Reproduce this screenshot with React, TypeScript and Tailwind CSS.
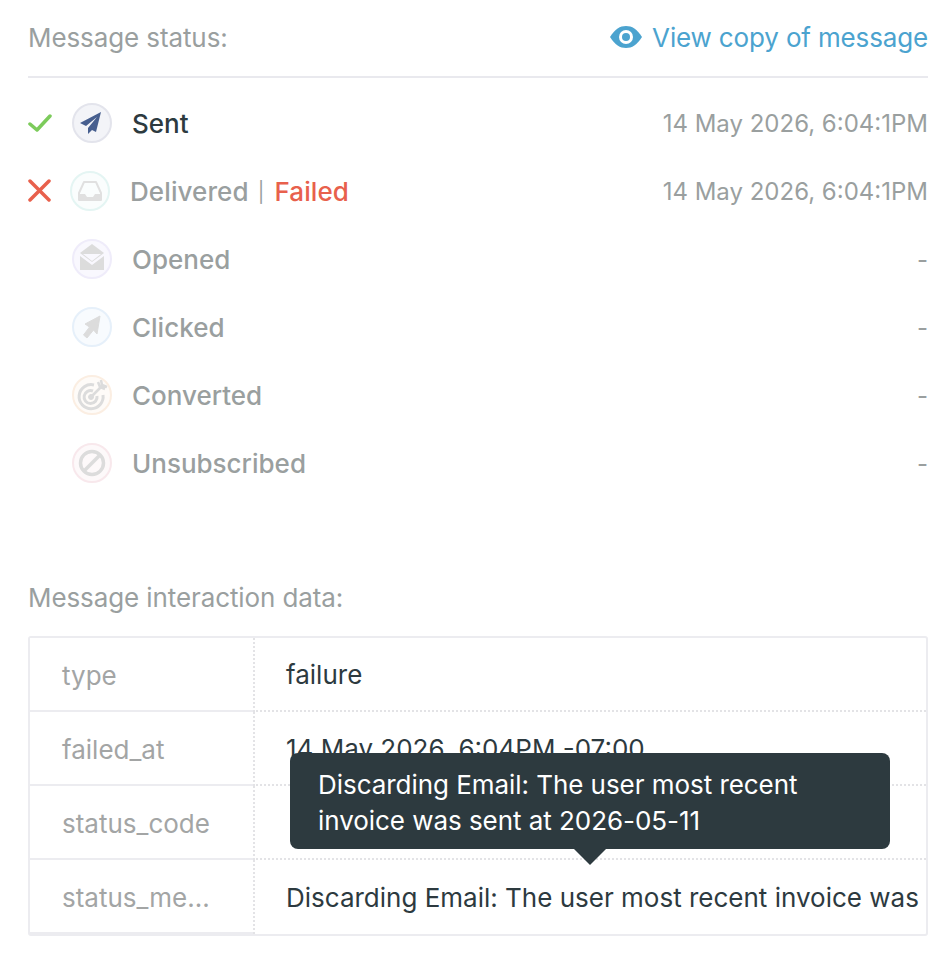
import React from 'react';

const font = "font-['Inter','Noto_Sans',sans-serif]";

function Plane() {
    return (
        <svg viewBox="0 0 40 40" className="w-[40px] h-[40px]">
            <path d="M29 9 L8 20 L14 23 L25 14 L16 25 L16 31 L20 27 L24 29 Z" fill="#475f8f" />
        </svg>
    );
}

function Inbox() {
    return (
        <svg viewBox="0 0 40 40" className="w-[40px] h-[40px]">
            <path d="M14 11 H26 L31 22 V29 H9 V22 Z" fill="none" stroke="#e0e0e0" strokeWidth="2" strokeLinejoin="round" />
            <path d="M9 23 H15 L17 26 H23 L25 23 H31 V30 H9 Z" fill="#e0e0e0" />
        </svg>
    );
}

function Envelope() {
    return (
        <svg viewBox="0 0 40 40" className="w-[40px] h-[40px]">
            <path d="M20 5 L32 14 L20 23 L8 14 Z" fill="#dcdcdc" />
            <path d="M8 17 L20 26 L32 17 V31 H8 Z" fill="#dcdcdc" />
            <path d="M11 15 H29 L20 22 Z" fill="#f9f8fe" />
        </svg>
    );
}

function Cursor() {
    return (
        <svg viewBox="0 0 40 40" className="w-[40px] h-[40px]">
            <path d="M28 9 L25 27 L21.5 23 L15 31 L11.5 28 L17.5 20 L13 17 Z" fill="#dcdcdc" stroke="#dcdcdc" strokeLinejoin="round" />
        </svg>
    );
}

function Target() {
    return (
        <svg viewBox="0 0 40 40" className="w-[40px] h-[40px]" fill="none" stroke="#dcdcdc">
            <path d="M22 10 A 12 12 0 1 0 31 20" strokeWidth="3" />
            <path d="M21 16 A 6.5 6.5 0 1 0 25 21" strokeWidth="3" />
            <circle cx="19" cy="22" r="2.5" fill="#dcdcdc" />
            <path d="M19 22 L29 12" strokeWidth="2.5" />
            <path d="M26 7 L28 12 L33 14 M29 5 L30 10 L35 12" strokeWidth="2.5" />
        </svg>
    );
}

function Ban() {
    return (
        <svg viewBox="0 0 40 40" className="w-[40px] h-[40px]" fill="none" stroke="#dcdcdc" strokeWidth="3.5">
            <circle cx="20" cy="20" r="11.5" />
            <path d="M12 28 L28 12" />
        </svg>
    );
}

function StatusRow({ mark, icon, circle, label, time, shift }: { mark?: React.ReactNode; icon: React.ReactNode; circle: string; label: React.ReactNode; time: string; shift?: boolean }) {
    return (
        <div className="flex items-center h-[68px]">
            <div className={shift ? 'w-[42px] shrink-0' : 'w-[44px] shrink-0'}>{mark}</div>
            <div className={`w-[40px] h-[40px] rounded-full border-2 box-border flex items-center justify-center overflow-hidden shrink-0 ${circle}`}>
                <div className="shrink-0">{icon}</div>
            </div>
            <div className="ml-[20px] flex-1">{label}</div>
            <div className="text-[24px] pt-[2px] text-[#9a9f9f]">{time}</div>
        </div>
    );
}

function TableRow({ name, value, last }: { name: string; value?: string; last?: boolean }) {
    return (
        <div className="flex h-[74px]">
            <div className="w-[223px] shrink-0 pl-[32px] pt-[2px] flex items-center text-[26px] text-[#a3a5a5] bg-white border-b-2 border-[#ececf0]">
                {name}
            </div>
            <div className={`flex-1 min-w-0 pl-[31px] pt-[2px] flex items-center border-l-2 border-dotted border-[#e3e3e6] text-[26px] text-[#2d3a3f] ${last ? '' : 'border-b-2 border-b-[#e3e3e6]'}`}>
                <div className="leading-[36px] whitespace-nowrap">{value}</div>
            </div>
        </div>
    );
}

export default function App() {
    return (
        <div className={`relative w-[944px] h-[964px] bg-white overflow-hidden pl-[28px] pr-[16px] ${font}`}>
            <div className="flex items-center justify-between h-[78px] border-b-2 border-[#e9e9ee] pb-[2px]">
                <span className="text-[26px] text-[#9a9f9f] tracking-[-0.1px]">Message status:</span>
                <a className="flex items-center text-[26px] text-[#4ba3cf] tracking-[-0.15px]">
                    <svg viewBox="0 0 32 22" className="w-[32px] h-[22px] mr-[10px]">
                        <path d="M0 11 C5 3 10 0 16 0 C22 0 27 3 32 11 C27 19 22 22 16 22 C10 22 5 19 0 11 Z" fill="#4ba3cf" />
                        <circle cx="16" cy="11" r="7" fill="#fff" />
                        <circle cx="16" cy="11" r="4" fill="#4ba3cf" />
                    </svg>
                    View copy of message
                </a>
            </div>
            <div className="pt-[11px]">
                <StatusRow
                    mark={
                        <svg viewBox="0 0 24 20" className="w-[24px] h-[20px]">
                            <path d="M2 11 L9 17 L22 3" fill="none" stroke="#7ccb5b" strokeWidth="3.5" strokeLinecap="round" strokeLinejoin="round" />
                        </svg>
                    }
                    icon={<Plane />}
                    circle="border-[#e3e4ec] bg-[#f3f4f8]"
                    label={<span className="text-[26px] font-medium text-[#2d3a3f]">Sent</span>}
                    time="14 May 2026, 6:04:1PM"
                />
                <StatusRow
                    shift
                    mark={
                        <svg viewBox="0 0 24 24" className="w-[24px] h-[24px]">
                            <path d="M2 2 L21 21 M21 2 L2 21" fill="none" stroke="#e8604c" strokeWidth="3.5" strokeLinecap="round" />
                        </svg>
                    }
                    icon={<Inbox />}
                    circle="border-[#e4f5f3] bg-[#fafdfd]"
                    label={
                        <span className="text-[26px] font-medium text-[#9a9f9f] tracking-[0.1px]">
                            Delivered<span className="text-[20px] font-normal ml-[9px] mr-[10px] align-[2px]">|</span><span className="text-[#e8604c]">Failed</span>
                        </span>
                    }
                    time="14 May 2026, 6:04:1PM"
                />
                <StatusRow icon={<Envelope />} circle="border-[#efecfa] bg-[#f9f8fe]" label={<span className="text-[26px] font-medium text-[#9a9f9f]">Opened</span>} time="-" />
                <StatusRow icon={<Cursor />} circle="border-[#e6f0fa] bg-[#f8fbfe]" label={<span className="text-[26px] font-medium text-[#9a9f9f]">Clicked</span>} time="-" />
                <StatusRow icon={<Target />} circle="border-[#fbeee2] bg-[#fefbf8]" label={<span className="text-[26px] font-medium text-[#9a9f9f]">Converted</span>} time="-" />
                <StatusRow icon={<Ban />} circle="border-[#f8e8ec] bg-[#fdf9fa]" label={<span className="text-[26px] font-medium text-[#9a9f9f]">Unsubscribed</span>} time="-" />
            </div>

            <div className="mt-[83px] text-[26px] leading-[36px] text-[#9a9f9f] tracking-[-0.1px]">Message interaction data:</div>

            <div className="mt-[20px] border-2 border-[#ececf0] rounded-[3px] bg-white">
                <TableRow name="type" value="failure" />
                <TableRow name="failed_at" value="14 May 2026, 6:04PM -07:00" />
                <TableRow name="status_code" />
                <TableRow last name="status_me..." value="Discarding Email: The user most recent invoice was" />
            </div>

            <div className="absolute left-[290px] top-[753px] w-[600px] h-[96px] rounded-[8px] bg-[#2d3a3f] px-[28px] pt-[14px] text-[26px] leading-[36px] text-white tracking-[-0.05px]">
                Discarding Email: The user most recent
                <br />
                invoice was sent at 2026-05-11
                <div className="absolute left-[284px] top-[96px] w-0 h-0 border-l-[16px] border-r-[16px] border-t-[16px] border-l-transparent border-r-transparent border-t-[#2d3a3f]" />
            </div>
        </div>
    );
}
